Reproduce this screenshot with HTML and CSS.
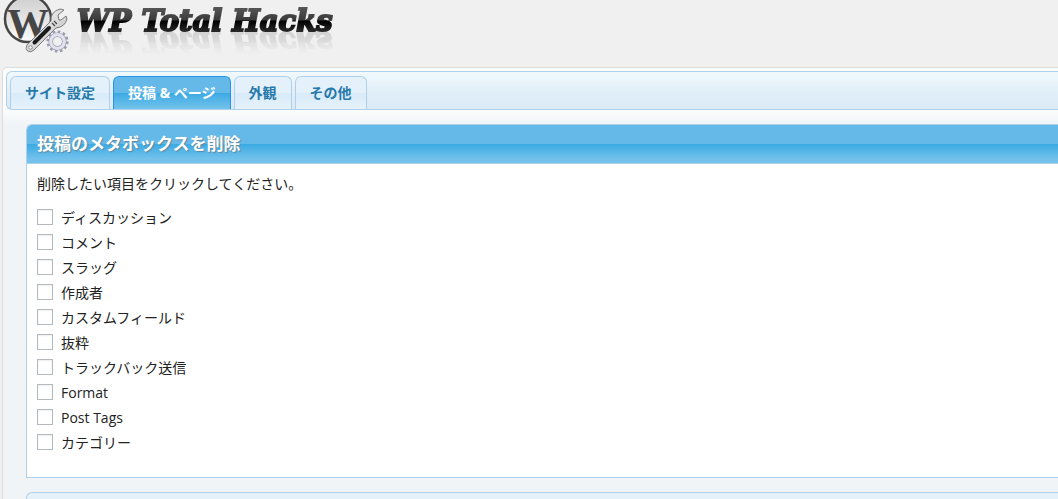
FILE: index.html
```
<!DOCTYPE html>
<html lang="ja">
<head>
    <meta charset="UTF-8">
    <meta name="viewport" content="width=device-width, initial-scale=1.0">
    <title>WP Total Hacks</title>
    <link rel="stylesheet" href="styles.css">
</head>
<body>
    <header class="header">
        <svg class="logo" width="72" height="56" viewBox="0 0 72 56" aria-hidden="true">
            <defs>
                <linearGradient id="face" x1="0" y1="0" x2="0" y2="1">
                    <stop offset="0" stop-color="#cfcfcf"/>
                    <stop offset="1" stop-color="#fafafa"/>
                </linearGradient>
                <linearGradient id="steel" x1="0" y1="0" x2="1" y2="1">
                    <stop offset="0" stop-color="#ffffff"/>
                    <stop offset="1" stop-color="#b8b8b8"/>
                </linearGradient>
            </defs>
            <circle cx="28" cy="19" r="23" fill="url(#face)" stroke="#464646" stroke-width="2.5"/>
            <text class="logo-w" x="28" y="38" text-anchor="middle">W</text>
            <!-- gear -->
            <g transform="translate(57.5 41.5)">
                <circle r="9.8" fill="none" stroke="#9a9ab0" stroke-width="2.6" stroke-dasharray="2.6 2.53"/>
                <circle r="6.8" fill="none" stroke="#9a9ab0" stroke-width="4.6"/>
                <circle r="6.8" fill="none" stroke="#e2e2ee" stroke-width="3.2"/>
            </g>
            <!-- wrench -->
            <path d="M27 45 L51 21 Q50 12 60 9 L64 10 L58 15 L59 20 L61 20 L66 16 L67 19 Q65 27 56 28 L34 50 Q31 53 27.500 51 Q25 49 27 45Z" fill="url(#steel)" stroke="#777" stroke-width="1"/>
            <path d="M34.500 42.500 L49 28" stroke="#1c1c1c" stroke-width="4" stroke-linecap="round"/>
            <path d="M52 23 L55 26 M54 21 L57 24" stroke="#444" stroke-width="1.2"/>
            <circle cx="30.500" cy="47.500" r="1.8" fill="#f4f4f4" stroke="#777" stroke-width=".8"/>
        </svg>
        <h1 class="title">WP Total Hacks</h1>
    </header>

    <main class="panel">
        <nav class="tabs">
            <a class="tab" href="#site">サイト設定</a>
            <a class="tab active" href="#post">投稿 &amp; ページ</a>
            <a class="tab" href="#appearance">外観</a>
            <a class="tab" href="#other">その他</a>
        </nav>

        <div class="content" id="post">
            <section class="box">
                <h2 class="box-title">投稿のメタボックスを削除</h2>
                <div class="box-body">
                    <p>削除したい項目をクリックしてください。</p>
                    <ul class="options">
                        <li><label><input type="checkbox"> ディスカッション</label></li>
                        <li><label><input type="checkbox"> コメント</label></li>
                        <li><label><input type="checkbox"> スラッグ</label></li>
                        <li><label><input type="checkbox"> 作成者</label></li>
                        <li><label><input type="checkbox"> カスタムフィールド</label></li>
                        <li><label><input type="checkbox"> 抜粋</label></li>
                        <li><label><input type="checkbox"> トラックバック送信</label></li>
                        <li><label><input type="checkbox"> Format</label></li>
                        <li><label><input type="checkbox"> Post Tags</label></li>
                        <li><label><input type="checkbox"> カテゴリー</label></li>
                    </ul>
                </div>
            </section>
            <section class="box closed"></section>
        </div>
    </main>
</body>
</html>
```
FILE: styles.css
```
* {
    box-sizing: border-box;
}
body {
    margin: 0;
    background-color: #f0f0f0;
    color: #222;
    font-family: "Open Sans", "Noto Sans CJK JP", sans-serif;
    font-size: 14px;
    line-height: 24px;
    overflow: hidden;
}
.header {
    display: flex;
    gap: 5px;
    height: 67px;
}
.logo {
    flex: none;
}
.logo-w {
    font: bold 42px "Liberation Serif", serif;
    fill: #464646;
}
.title {
    margin: 0;
    height: 40px;
    font: italic bold 29px/42px "DejaVu Serif", serif;
    white-space: nowrap;
    color: transparent;
    background: linear-gradient(#555 8px, #3a3a3a 20px, #000 21px, #2a2a2a 32px);
    -webkit-background-clip: text;
    background-clip: text;
    -webkit-text-stroke: 2px transparent;
    -webkit-box-reflect: below -17px linear-gradient(transparent 20%, rgba(0, 0, 0, 0.2));
}
.panel {
    margin-left: 2px;
    padding: 3px 0 0 3px;
    border: 1px solid #dcdcdc;
    border-right: 0;
    border-radius: 5px 0 0 0;
    background: linear-gradient(#fcfdfe 40px, #f0f4f7 58px);
}
.tabs {
    display: flex;
    align-items: flex-end;
    gap: 3px;
    height: 39px;
    padding-left: 3px;
    border: 1px solid #aed0ea;
    border-right: 0;
    border-radius: 6px 0 0 6px;
    background: linear-gradient(#f1f9fc, #deedf7 65%, #dcebf7);
}
.tab {
    height: 33px;
    padding: 0 14px;
    border: 1px solid #aed0ea;
    border-bottom: 0;
    border-radius: 6px 6px 0 0;
    background: linear-gradient(#e4f1fb 50%, #d7ebf9 50%, #e6f2fb);
    color: #2779aa;
    font-weight: bold;
    line-height: 31px;
    text-decoration: none;
}
.tab.active {
    border-color: #2694e8;
    background: linear-gradient(#64b9e9 50%, #3baae3 50%, #74c2ec);
    color: #fff;
}
.content {
    padding: 14px 0 0 20px;
}
.box {
    margin-bottom: 14px;
    border: 1px solid #aed0ea;
    border-right: 0;
    border-radius: 6px 0 0 0;
    background-color: #fff;
}
.box-title {
    margin: 0;
    height: 39px;
    padding-left: 10px;
    border-bottom: 1px solid #aed0ea;
    border-radius: 5px 0 0 0;
    background: linear-gradient(#64b9e9 50%, #3baae3 50%, #74c2ec 90%);
    color: #fff;
    font-size: 17px;
    line-height: 38px;
    text-shadow: 1px 1px 1px #66879b;
}
.box-body {
    padding: 8px 10px 22px;
}
.box-body p {
    margin: 0 0 9px;
}
.options {
    margin: 0;
    padding: 0;
    list-style: none;
}
.options label {
    display: flex;
    gap: 8px;
    line-height: 25px;
}
.options input {
    appearance: none;
    width: 16px;
    height: 16px;
    margin: 4px 0;
    border: 1px solid #b4b9be;
    background-color: #fff;
    box-shadow: inset 0 1px 2px #eee;
}
.closed {
    height: 39px;
    background-color: #e4f1fb;
}
```
